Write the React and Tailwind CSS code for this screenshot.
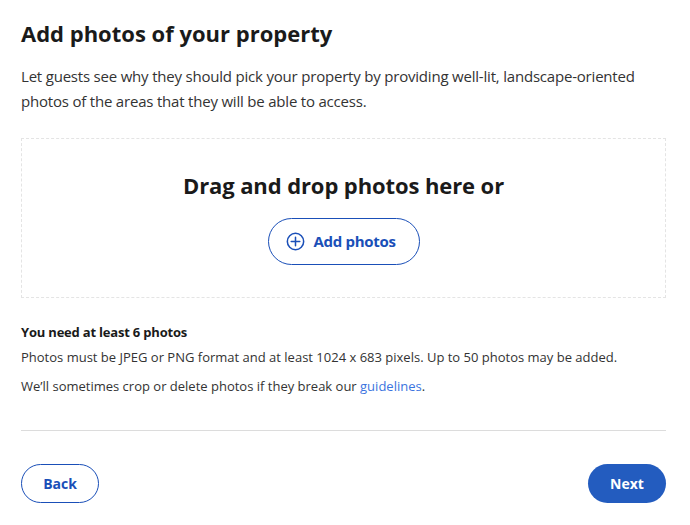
const PlusCircle = () => (
    <svg width="19" height="19" viewBox="0 0 20 20" fill="none" stroke="#1a4fb8" strokeWidth="1.6">
        <circle cx="10" cy="10" r="8.6" />
        <path d="M10 5.5v9M5.5 10h9" strokeLinecap="round" />
    </svg>
);

const App = () => {
    return (
        <div className="min-h-screen bg-white pl-[21px] pr-[24px] pt-[18px] text-[#1a1a1a]" style={{ fontFamily: '"Open Sans", sans-serif' }}>
            <h1 className="text-[22px] font-bold leading-[30px]">Add photos of your property</h1>
            <p className="mt-[16px] max-w-[630px] text-[15px] leading-[25px] text-[#333] tracking-[-0.2px]">
                Let guests see why they should pick your property by providing well-lit, landscape-oriented photos of the areas that they will be able to access.
            </p>

            {/* Drop zone */}
            <div className="mt-[24px] h-[160px] border border-dashed border-[#e4e4e4] flex flex-col items-center pt-[31px]">
                <h2 className="text-[22px] font-bold leading-[30px] tracking-[-0.1px]">Drag and drop photos here or</h2>
                <button className="mt-[18px] h-[47px] w-[152px] rounded-full border border-[#1a4fb8] flex items-center gap-[9px] pl-[17px] text-[#1a4fb8] text-[15px] font-bold tracking-[-0.3px]">
                    <PlusCircle />
                    Add photos
                </button>
            </div>

            <div className="mt-[24px] text-[13px] text-[#333]">
                <p className="font-bold text-[#1a1a1a] leading-[20px] tracking-[-0.2px]">You need at least 6 photos</p>
                <p className="mt-[5px] leading-[20px]">Photos must be JPEG or PNG format and at least 1024 x 683 pixels. Up to 50 photos may be added.</p>
                <p className="mt-[9px] leading-[20px]">
                    We’ll sometimes crop or delete photos if they break our <a href="#" className="text-[#3b74e0]">guidelines</a>.
                </p>
            </div>

            <div className="mt-[34px] border-t border-[#dcdcdc]" />

            <div className="mt-[33px] flex justify-between">
                <button className="h-[39px] w-[78px] rounded-full border border-[#1a4fb8] text-[#1a4fb8] text-[14px] font-bold">Back</button>
                <button className="h-[39px] w-[78px] rounded-full bg-[#235cbf] text-white text-[14px] font-bold">Next</button>
            </div>
        </div>
    );
};

export default App;
